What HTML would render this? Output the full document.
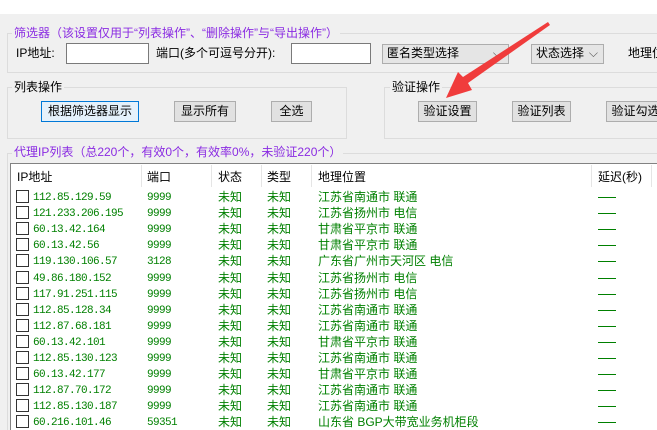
<!DOCTYPE html><html style="overflow:hidden;height:430px"><head><meta charset="utf-8"><style>
body{margin:0;width:657px;height:430px;overflow:hidden;background:#f0f0f0;font-family:"Liberation Sans","WenQuanYi Zen Hei","Noto Sans CJK SC",sans-serif;font-size:12px;position:relative}
.a{position:absolute;white-space:nowrap;line-height:14px}
.m{font-family:"Liberation Mono",monospace;font-size:11px;letter-spacing:-0.6px;margin-top:1px}
.gb{position:absolute;border:1px solid #dcdcdc}
.lg{position:absolute;background:#f0f0f0;padding:0 2px;line-height:14px}
.in{position:absolute;background:#fff;border:1px solid #7a7a7a;box-sizing:border-box}
.sel{position:absolute;background:#e5e5e5;border:1px solid #adadad;box-sizing:border-box;line-height:17px;padding-left:4px}
.btn{position:absolute;background:#e1e1e1;border:1px solid #adadad;box-sizing:border-box;text-align:center;line-height:19px}
.g{color:#008000}
.cb{position:absolute;width:11px;height:11px;border:1px solid #333;background:#fff}
.sep{position:absolute;top:165px;width:1px;height:22px;background:#e5e5e5}
</style></head><body>
<div style="position:absolute;left:0;top:0;width:657px;height:14px;background:#fff"></div>
<div class="gb" style="left:7px;top:33px;width:660px;height:38px"></div>
<div class="lg" style="left:12px;top:26px;color:#8a2be2">筛选器（该设置仅用于“列表操作”、“删除操作”与“导出操作”）</div>
<div class="a" style="left:16px;top:46px">IP地址:</div>
<div class="in" style="left:66px;top:43px;width:83px;height:21px"></div>
<div class="a" style="left:156px;top:46px">端口(多个可逗号分开):</div>
<div class="in" style="left:291px;top:43px;width:80px;height:21px"></div>
<div class="sel" style="left:382px;top:44px;width:127px;height:20px">匿名类型选择<span style="position:absolute;right:6px;color:#555">⌵</span></div>
<div class="sel" style="left:531px;top:44px;width:73px;height:20px">状态选择<span style="position:absolute;right:5px;color:#555">⌵</span></div>
<div class="a" style="left:628px;top:46px">地理位置</div>
<div class="gb" style="left:7px;top:87px;width:338px;height:50px"></div>
<div class="lg" style="left:12px;top:80px">列表操作</div>
<div class="btn" style="left:41px;top:101px;width:98px;height:21px;border-color:#0078d7;background:#e5f1fb">根据筛选器显示</div>
<div class="btn" style="left:174px;top:101px;width:62px;height:21px">显示所有</div>
<div class="btn" style="left:271px;top:101px;width:41px;height:21px">全选</div>
<div class="gb" style="left:384px;top:87px;width:280px;height:50px"></div>
<div class="lg" style="left:390px;top:80px">验证操作</div>
<div class="btn" style="left:418px;top:101px;width:59px;height:21px">验证设置</div>
<div class="btn" style="left:512px;top:101px;width:59px;height:21px">验证列表</div>
<div class="btn" style="left:606px;top:101px;width:59px;height:21px">验证勾选</div>
<div class="gb" style="left:7px;top:153px;width:660px;height:290px;border-bottom:none"></div>
<div class="lg" style="left:12px;top:145px;color:#8a2be2">代理IP列表（总220个，有效0个，有效率0%，未验证220个）</div>
<div style="position:absolute;left:10px;top:163px;width:660px;height:280px;background:#fff;border-top:1px solid #828282;border-left:1px solid #828282"></div>
<div class="sep" style="left:141px"></div><div class="sep" style="left:211px"></div><div class="sep" style="left:261px"></div><div class="sep" style="left:311px"></div><div class="sep" style="left:591px"></div><div class="sep" style="left:651px"></div>
<div class="a" style="left:17px;top:170px">IP地址</div><div class="a" style="left:147px;top:170px">端口</div><div class="a" style="left:218px;top:170px">状态</div><div class="a" style="left:267px;top:170px">类型</div><div class="a" style="left:318px;top:170px">地理位置</div><div class="a" style="left:598px;top:170px">延迟(秒)</div>
<div id="rows"></div>
<script>
var d=[["112.85.129.59","9999","江苏省南通市 联通"],["121.233.206.195","9999","江苏省扬州市 电信"],["60.13.42.164","9999","甘肃省平京市 联通"],["60.13.42.56","9999","甘肃省平京市 联通"],["119.130.106.57","3128","广东省广州市天河区 电信"],["49.86.180.152","9999","江苏省扬州市 电信"],["117.91.251.115","9999","江苏省扬州市 电信"],["112.85.128.34","9999","江苏省南通市 联通"],["112.87.68.181","9999","江苏省南通市 联通"],["60.13.42.101","9999","甘肃省平京市 联通"],["112.85.130.123","9999","江苏省南通市 联通"],["60.13.42.177","9999","甘肃省平京市 联通"],["112.87.70.172","9999","江苏省南通市 联通"],["112.85.130.187","9999","江苏省南通市 联通"],["60.216.101.46","59351","山东省 BGP大带宽业务机柜段"]];
var h="";d.forEach(function(r,i){var y=190+i*16.1;h+='<div class="cb" style="left:16px;top:'+(y)+'px"></div><div class="a g m" style="left:33px;top:'+y+'px">'+r[0]+'</div><div class="a g m" style="left:147px;top:'+y+'px">'+r[1]+'</div><div class="a g" style="left:218px;top:'+y+'px">未知</div><div class="a g" style="left:267px;top:'+y+'px">未知</div><div class="a g" style="left:318px;top:'+y+'px">'+r[2]+'</div><div style="position:absolute;left:598px;top:'+(y+7)+'px;width:18px;height:1px;background:#008000"></div>';});
document.getElementById("rows").innerHTML=h;
</script>
<svg style="position:absolute;left:0;top:0" width="657" height="430"><polygon points="548,22 550,25 468,83 472,90 446,98 458,72 463,77" fill="#f03c3c"/></svg>
</body></html>
